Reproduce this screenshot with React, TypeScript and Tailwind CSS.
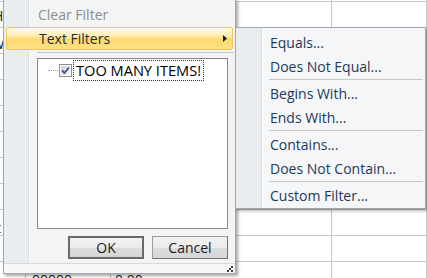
const font = { fontFamily: '"Open Sans", "Noto Sans", sans-serif' };

const subItems: (string | null)[] = [
  "Equals...",
  "Does Not Equal...",
  null,
  "Begins With...",
  "Ends With...",
  null,
  "Contains...",
  "Does Not Contain...",
  null,
  "Custom Filter...",
];

function Sheet() {
  // spreadsheet behind the popup
  const rows = Array.from({ length: 11 });
  return (
    <div className="grid grid-cols-[26px_85px_221px_1fr] grid-rows-[2px_repeat(11,26px)] text-[13px] text-[#222]">
      {Array.from({ length: 4 }).map((_, c) => (
        <div key={"h" + c} className="border-b border-r border-[#c6c6c6]" />
      ))}
      {rows.map((_, r) =>
        Array.from({ length: 4 }).map((_, c) => (
          <div key={r + "-" + c} className="border-b border-r border-[#c6c6c6] overflow-hidden whitespace-nowrap">
            {c === 0 && r === 0 && <span className="block ml-[-7px] pt-[3px] text-[14px]">H</span>}
            {c === 0 && r === 1 && <span className="block ml-[-7px] pt-[5px] text-[14px]">w</span>}
            {c === 0 && r === 8 && <span className="block ml-[-4px] pt-[7px] text-[14px]">t</span>}
            {c === 1 && r === 10 && <span className="block pl-[6px] pt-[7px] text-[14px]">00000</span>}
            {c === 2 && r === 10 && <span className="block pl-[4px] pt-[7px] text-[14px]">0.00</span>}
          </div>
        ))
      )}
    </div>
  );
}

function Checkbox() {
  return (
    <div className="w-[13px] h-[13px] border border-[#8e8f8f] bg-white p-[1px]">
      <div className="w-full h-full bg-[linear-gradient(135deg,#cbcfd5,#f6f6f6)] flex items-center justify-center">
        <svg width="9" height="9" viewBox="0 0 9 9">
          <path d="M1 4.5 L3.5 7 L8 1.5" fill="none" stroke="#3a5597" strokeWidth="1.8" />
        </svg>
      </div>
    </div>
  );
}

export default function App() {
  return (
    <div className="relative w-[427px] h-[278px] overflow-hidden bg-white" style={font}>
      <Sheet />

      {/* main filter dropdown */}
      <div className="absolute left-[3px] top-[-1px] w-[233px] h-[275px] flex flex-col border border-[#a0a8b3] bg-[#f3f4f5] shadow-[2px_2px_3px_rgba(0,0,0,0.35)]">
        <div className="flex-1 flex flex-col pt-[2px] bg-[linear-gradient(to_right,#e9edf0_0_24px,#d9dde2_24px_25px,#fbfbfb_25px_26px,#f3f4f5_26px)]">
          <div className="h-[24px] flex items-center pl-[34px] text-[14px] text-[#8d8d8d]">Clear Filter</div>
          <div className="mt-[1px] mx-[2px] h-[23px] flex items-center justify-between pl-[32px] pr-[5px] rounded-[2px] border border-[#f0c75a] bg-[linear-gradient(to_bottom,#fffbe6_0%,#feefb9_35%,#fdda6c_55%,#fde08a_100%)] text-[14px] text-[#1f2b3f]">
            <span>Text Filters</span>
            <svg width="4" height="7" viewBox="0 0 4 7">
              <path d="M0 0 L4 3.5 L0 7 Z" fill="#1a1a2a" />
            </svg>
          </div>
          <div className="mt-[2px] ml-[33px] mr-[1px] h-[1px] bg-[#c5c7ca]" />
          <div className="mt-[5px] ml-[33px] w-[191px] h-[171px] border border-[#828790] bg-white pt-[1px]">
            <div className="flex items-center h-[21px] pl-[10px]">
              <div className="w-[10px] border-t border-dotted border-[#a0a0a0]" />
              <div className="ml-[1px]">
                <Checkbox />
              </div>
              <div className="ml-[1px] h-[21px] flex items-center px-[2px] border border-dotted border-[#333] text-[14.6px] text-black">
                TOO MANY ITEMS!
              </div>
            </div>
          </div>
          <div className="mt-[7px] ml-[64px] flex gap-[8px] text-[14px] text-[#1a1a1a]">
            <button className="w-[76px] h-[23px] border-2 border-[#6a6a6a] bg-[linear-gradient(to_bottom,#f2f2f2_0%,#ebebeb_50%,#dddddd_51%,#d6d6d6_100%)] flex items-center justify-center">
              OK
            </button>
            <button className="w-[76px] h-[23px] border border-[#9c9c9c] border-r-[#707070] border-b-[#707070] bg-[linear-gradient(to_bottom,#f2f2f2_0%,#ebebeb_50%,#dddddd_51%,#d6d6d6_100%)] flex items-center justify-center">
              Cancel
            </button>
          </div>
        </div>
        <div className="h-[10px] border-t border-[#d8dadd] bg-[#f7f8f9] flex justify-end items-end pr-[2px] pb-[1px]">
          <svg width="6" height="6" viewBox="0 0 6 6">
            <rect x="4" y="0" width="2" height="2" fill="#404040" />
            <rect x="2" y="2" width="2" height="2" fill="#404040" />
            <rect x="4" y="4" width="2" height="2" fill="#404040" />
            <rect x="0" y="4" width="2" height="2" fill="#404040" />
          </svg>
        </div>
      </div>

      {/* text filters submenu */}
      <div className="absolute left-[235px] top-[27px] w-[191px] border border-[#a0a8b3] pt-[2px] pb-[1px] shadow-[2px_2px_3px_rgba(0,0,0,0.3)] bg-[linear-gradient(to_right,#e9edf0_0_25px,#d9dde2_25px_26px,#fbfbfb_26px_27px,#f5f6f7_27px)] text-[14px] text-[#1e395b]">
        {subItems.map((s, i) =>
          s === null ? (
            <div key={i} className="h-[3px] flex items-center pl-[33px] pr-[2px]">
              <div className="w-full h-[1px] bg-[#c5c7ca]" />
            </div>
          ) : (
            <div key={i} className="h-[24px] flex items-center pl-[34px]">
              {s}
            </div>
          )
        )}
      </div>
    </div>
  );
}
